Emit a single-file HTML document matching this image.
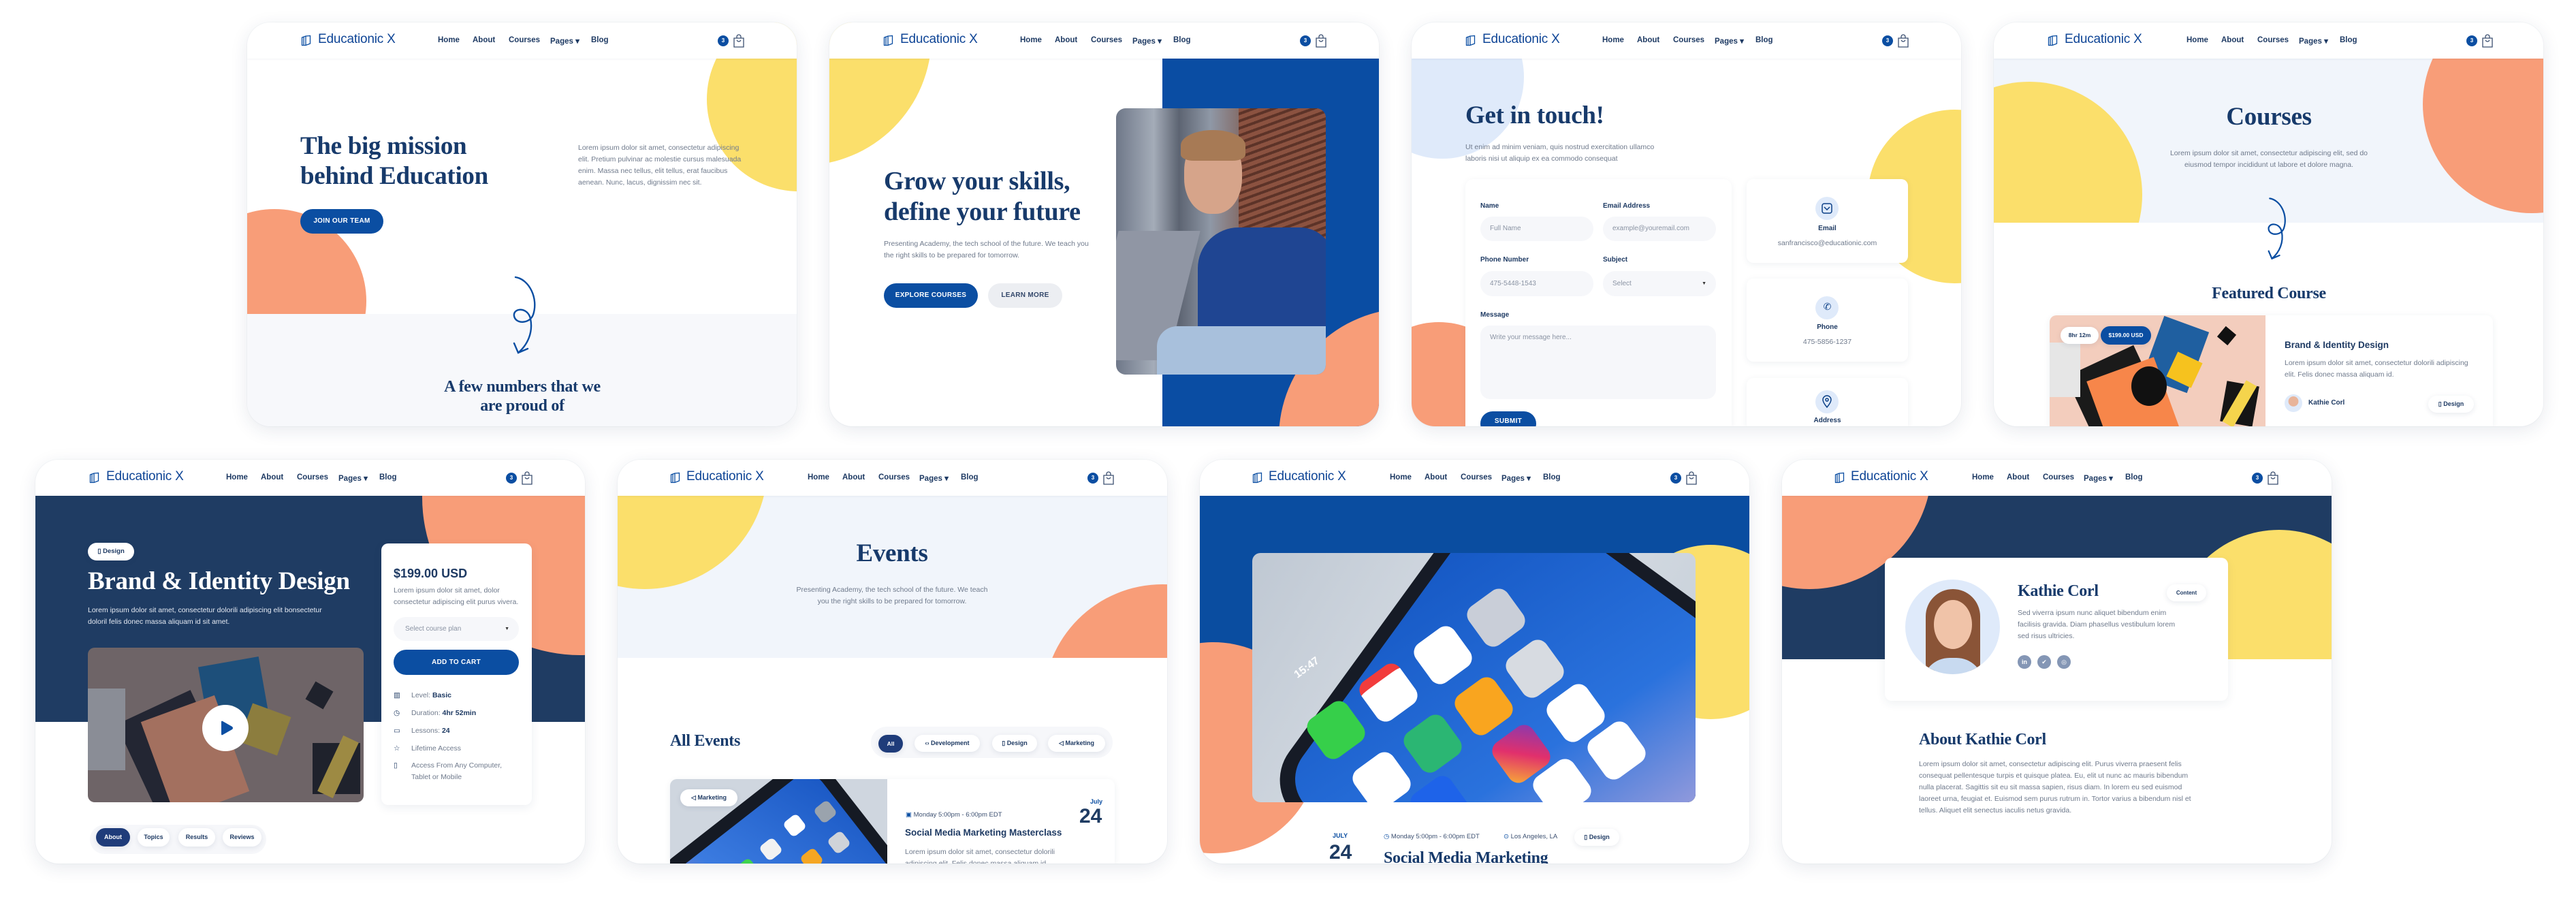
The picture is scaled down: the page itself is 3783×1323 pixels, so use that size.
<!DOCTYPE html>
<html style="width:3783px;height:1323px;overflow:hidden"><head><meta charset="utf-8">
<style>
*{margin:0;padding:0;box-sizing:border-box}
body{width:3783px;height:1323px;background:#fff;position:relative;overflow:hidden;font-family:"Liberation Sans",sans-serif;color:#1e3a63}
.c{position:absolute;width:807px;height:593px;border-radius:34px;overflow:hidden;background:#fff;box-shadow:0 6px 26px rgba(30,50,90,.10),0 0 0 1px rgba(30,50,90,.03)}
.a{position:absolute}
.hd{position:absolute;left:0;top:0;width:100%;height:53px;background:#fff;z-index:20;box-shadow:0 1px 3px rgba(30,50,90,.06)}
.lg{position:absolute;left:104px;top:14px;font-size:19px;color:#0f4596;letter-spacing:-.2px}
.nv{position:absolute;top:20px;font-size:11.5px;font-weight:bold;color:#1e3a63}
.bd{position:absolute;left:691px;top:19px;width:16px;height:16px;border-radius:50%;background:#0b4ea2;color:#fff;font-size:8px;font-weight:bold;text-align:center;line-height:16px}
.srf{font-family:"Liberation Serif",serif;font-weight:bold;color:#173a6b;letter-spacing:-.3px}
.p{font-size:10.5px;line-height:17px;color:#6f7a8c}
.circ{position:absolute;border-radius:50%}
.Y{background:#fbdf6b}.O{background:#f89d78}
.btn{position:absolute;border-radius:20px;background:#0b4ea2;color:#fff;font-size:10px;font-weight:bold;text-align:center;letter-spacing:.3px}
.pill{position:absolute;border-radius:14px;background:#fff;box-shadow:0 2px 8px rgba(30,50,90,.10);font-size:9.5px;font-weight:bold;color:#1e3a63;text-align:center}
.inp{position:absolute;border-radius:18px;background:#f6f7fa;font-size:10px;color:#8a93a3;padding-left:14px}
.lb{position:absolute;font-size:10px;font-weight:bold;color:#1e3a63}
</style></head><body>

<!-- CARD 1 -->
<div class="c" style="left:363px;top:33px">
 <div class="hd">
  <svg class="a" style="left:79px;top:18px" width="15" height="17" viewBox="0 0 15 17"><path d="M1.5 4 L7 2 L13.5 1.5 V13 L7 15.5 L1.5 15.5 Z M7 2 V15.5 M4 3 V15" fill="none" stroke="#0b4ea2" stroke-width="1.3"/></svg>
  <div class="lg">Educationic X</div>
  <div class="nv" style="left:280px">Home</div><div class="nv" style="left:331px">About</div><div class="nv" style="left:384px">Courses</div><div class="nv" style="left:445px">Pages ▾</div><div class="nv" style="left:505px">Blog</div>
  <div class="bd">3</div>
  <svg class="a" style="left:713px;top:17px" width="18" height="20" viewBox="0 0 18 20"><path d="M2 6 H16 V19 H2 Z M6 6 V4 A3 3 0 0 1 12 4 V6 M6 9 Q9 13 12 9" fill="none" stroke="#3b4f70" stroke-width="1.3"/></svg>
 </div>
 <div class="circ Y" style="left:675px;top:-22px;width:270px;height:270px"></div>
 <div class="circ O" style="left:-95px;top:274px;width:270px;height:270px"></div>
 <div class="a" style="left:0;top:428px;width:100%;height:170px;background:#f7f8fb"></div>
 <div class="a srf" style="left:78px;top:160px;font-size:37px;line-height:44px">The big mission<br>behind Education</div>
 <div class="a p" style="left:486px;top:176px;width:248px">Lorem ipsum dolor sit amet, consectetur adipiscing elit. Pretium pulvinar ac molestie cursus malesuada enim. Massa nec tellus, elit tellus, erat faucibus aenean. Nunc, lacus, dignissim nec sit.</div>
 <div class="btn" style="left:78px;top:274px;width:122px;height:36px;line-height:36px">JOIN OUR TEAM</div>
 <svg class="a" style="left:388px;top:371px" width="44" height="118" viewBox="0 0 44 118"><path d="M6 3 C26 6 40 34 32 58 C27 72 6 72 4 60 C2 48 24 46 28 64 C32 84 24 102 10 114 M4 100 L10 114 L24 108" fill="none" stroke="#0b4ea2" stroke-width="2.4" stroke-linecap="round"/></svg>
 <div class="a srf" style="left:0;width:808px;text-align:center;top:521px;font-size:24px;line-height:28px">A few numbers that we<br>are proud of</div>
</div>

<!-- CARD 2 -->
<div class="c" style="left:1218px;top:33px">
 <div class="hd">
  <svg class="a" style="left:79px;top:18px" width="15" height="17" viewBox="0 0 15 17"><path d="M1.5 4 L7 2 L13.5 1.5 V13 L7 15.5 L1.5 15.5 Z M7 2 V15.5 M4 3 V15" fill="none" stroke="#0b4ea2" stroke-width="1.3"/></svg>
  <div class="lg">Educationic X</div>
  <div class="nv" style="left:280px">Home</div><div class="nv" style="left:331px">About</div><div class="nv" style="left:384px">Courses</div><div class="nv" style="left:445px">Pages ▾</div><div class="nv" style="left:505px">Blog</div>
  <div class="bd">3</div>
  <svg class="a" style="left:713px;top:17px" width="18" height="20" viewBox="0 0 18 20"><path d="M2 6 H16 V19 H2 Z M6 6 V4 A3 3 0 0 1 12 4 V6 M6 9 Q9 13 12 9" fill="none" stroke="#3b4f70" stroke-width="1.3"/></svg>
 </div>
 <div class="circ Y" style="left:-230px;top:-170px;width:380px;height:380px"></div>
 <div class="a" style="left:489px;top:53px;width:320px;height:540px;background:#0a4da3"></div>
 <div class="circ O" style="left:660px;top:420px;width:380px;height:380px"></div>
 <div class="a" style="left:421px;top:126px;width:308px;height:391px;border-radius:14px;overflow:hidden;background:linear-gradient(90deg,#6f7889 0%,#a4acb8 18%,#5d6472 30%,#8f98a6 45%,#7b4c3c 70%,#9a5d46 100%)">
  <div class="a" style="left:180px;top:0;width:128px;height:260px;background:repeating-linear-gradient(160deg,#8b5240 0 6px,#5c3328 6px 10px)"></div>
  <div class="a" style="left:120px;top:175px;width:200px;height:170px;border-radius:60px 50px 10px 10px;background:#1f4592"></div>
  <div class="a" style="left:100px;top:40px;width:85px;height:115px;border-radius:45%;background:#d6a48a"></div>
  <div class="a" style="left:95px;top:32px;width:95px;height:45px;border-radius:50% 50% 20% 20%;background:#a77a55"></div>
  <div class="a" style="left:-20px;top:180px;width:120px;height:190px;background:#9096a4;transform:skewX(-14deg)"></div>
  <div class="a" style="left:60px;top:320px;width:260px;height:80px;background:#a8c0dc;border-radius:30px 10px 0 0"></div>
 </div>
 <div class="a srf" style="left:80px;top:211px;font-size:38px;line-height:45px">Grow your skills,<br>define your future</div>
 <div class="a p" style="left:80px;top:317px;width:310px">Presenting Academy, the tech school of the future. We teach you the right skills to be prepared for tomorrow.</div>
 <div class="btn" style="left:80px;top:383px;width:138px;height:36px;line-height:36px">EXPLORE COURSES</div>
 <div class="btn" style="left:233px;top:383px;width:109px;height:36px;line-height:36px;background:#eceef2;color:#33476a">LEARN MORE</div>
</div>

<!-- CARD 3 -->
<div class="c" style="left:2073px;top:33px">
 <div class="hd">
  <svg class="a" style="left:79px;top:18px" width="15" height="17" viewBox="0 0 15 17"><path d="M1.5 4 L7 2 L13.5 1.5 V13 L7 15.5 L1.5 15.5 Z M7 2 V15.5 M4 3 V15" fill="none" stroke="#0b4ea2" stroke-width="1.3"/></svg>
  <div class="lg">Educationic X</div>
  <div class="nv" style="left:280px">Home</div><div class="nv" style="left:331px">About</div><div class="nv" style="left:384px">Courses</div><div class="nv" style="left:445px">Pages ▾</div><div class="nv" style="left:505px">Blog</div>
  <div class="bd">3</div>
  <svg class="a" style="left:713px;top:17px" width="18" height="20" viewBox="0 0 18 20"><path d="M2 6 H16 V19 H2 Z M6 6 V4 A3 3 0 0 1 12 4 V6 M6 9 Q9 13 12 9" fill="none" stroke="#3b4f70" stroke-width="1.3"/></svg>
 </div>
 <div class="circ" style="left:-75px;top:-40px;width:240px;height:240px;background:#dfeafa"></div>
 <div class="circ Y" style="left:670px;top:128px;width:255px;height:255px"></div>
 <div class="circ O" style="left:-80px;top:440px;width:240px;height:240px"></div>
 <div class="a srf" style="left:79px;top:116px;font-size:37px;line-height:42px">Get in touch!</div>
 <div class="a p" style="left:79px;top:175px;width:300px">Ut enim ad minim veniam, quis nostrud exercitation ullamco laboris nisi ut aliquip ex ea commodo consequat</div>
 <div class="a" style="left:79px;top:230px;width:391px;height:363px;background:#fff;border-radius:12px 12px 0 0;box-shadow:0 2px 10px rgba(30,50,90,.06);overflow:hidden">
  <div class="lb" style="left:22px;top:34px">Name</div><div class="lb" style="left:202px;top:34px">Email Address</div>
  <div class="inp" style="left:22px;top:55px;width:166px;height:36px;line-height:36px">Full Name</div>
  <div class="inp" style="left:202px;top:55px;width:166px;height:36px;line-height:36px">example@youremail.com</div>
  <div class="lb" style="left:22px;top:113px">Phone Number</div><div class="lb" style="left:202px;top:113px">Subject</div>
  <div class="inp" style="left:22px;top:135px;width:166px;height:37px;line-height:37px">475-5448-1543</div>
  <div class="inp" style="left:202px;top:135px;width:166px;height:37px;line-height:37px">Select<span style="position:absolute;right:14px;font-size:7px;color:#333">▼</span></div>
  <div class="lb" style="left:22px;top:194px">Message</div>
  <div class="inp" style="left:22px;top:215px;width:346px;height:108px;padding-top:10px;line-height:16px;border-radius:14px">Write your message here...</div>
  <div class="btn" style="left:22px;top:341px;width:82px;height:36px;line-height:30px">SUBMIT</div>
 </div>
 <div class="a" style="left:492px;top:230px;width:237px;height:123px;background:#fff;border-radius:10px;box-shadow:0 2px 10px rgba(30,50,90,.07);text-align:center">
  <div class="circ" style="left:101px;top:26px;width:34px;height:34px;background:#dfeafa"></div>
  <svg class="a" style="left:109px;top:34px" width="18" height="18" viewBox="0 0 18 18"><rect x="2" y="2" width="14" height="14" rx="3" fill="none" stroke="#0b3f86" stroke-width="1.5"/><path d="M5 7 L9 11 L13 7" fill="none" stroke="#0b3f86" stroke-width="1.5"/></svg>
  <div class="lb" style="left:0;width:100%;top:67px">Email</div>
  <div class="a p" style="left:0;width:100%;top:86px">sanfrancisco@educationic.com</div>
 </div>
 <div class="a" style="left:492px;top:376px;width:237px;height:122px;background:#fff;border-radius:10px;box-shadow:0 2px 10px rgba(30,50,90,.07);text-align:center">
  <div class="circ" style="left:101px;top:26px;width:34px;height:34px;background:#dfeafa"></div>
  <div class="a" style="left:0;width:100%;top:33px;font-size:14px;color:#0b3f86">✆</div>
  <div class="lb" style="left:0;width:100%;top:66px">Phone</div>
  <div class="a p" style="left:0;width:100%;top:85px">475-5856-1237</div>
 </div>
 <div class="a" style="left:492px;top:522px;width:237px;height:71px;background:#fff;border-radius:10px 10px 0 0;box-shadow:0 2px 10px rgba(30,50,90,.07);text-align:center">
  <div class="circ" style="left:101px;top:18px;width:34px;height:34px;background:#dfeafa"></div>
  <svg class="a" style="left:110px;top:25px" width="16" height="20" viewBox="0 0 16 20"><path d="M8 18 C3 12 2 9 2 7 A6 6 0 0 1 14 7 C14 9 13 12 8 18 Z" fill="none" stroke="#0b3f86" stroke-width="1.5"/><circle cx="8" cy="7" r="2" fill="none" stroke="#0b3f86" stroke-width="1.5"/></svg>
  <div class="lb" style="left:0;width:100%;top:57px">Address</div>
 </div>
</div>

<!-- CARD 4 -->
<div class="c" style="left:2928px;top:33px">
 <div class="hd">
  <svg class="a" style="left:79px;top:18px" width="15" height="17" viewBox="0 0 15 17"><path d="M1.5 4 L7 2 L13.5 1.5 V13 L7 15.5 L1.5 15.5 Z M7 2 V15.5 M4 3 V15" fill="none" stroke="#0b4ea2" stroke-width="1.3"/></svg>
  <div class="lg">Educationic X</div>
  <div class="nv" style="left:283px">Home</div><div class="nv" style="left:334px">About</div><div class="nv" style="left:387px">Courses</div><div class="nv" style="left:448px">Pages ▾</div><div class="nv" style="left:508px">Blog</div>
  <div class="bd" style="left:694px">3</div>
  <svg class="a" style="left:716px;top:17px" width="18" height="20" viewBox="0 0 18 20"><path d="M2 6 H16 V19 H2 Z M6 6 V4 A3 3 0 0 1 12 4 V6 M6 9 Q9 13 12 9" fill="none" stroke="#3b4f70" stroke-width="1.3"/></svg>
 </div>
 <div class="a" style="left:0;top:53px;width:100%;height:241px;background:#f1f5fb;overflow:hidden">
  <div class="circ Y" style="left:-114px;top:34px;width:332px;height:332px"></div>
  <div class="circ O" style="left:630px;top:-93px;width:320px;height:320px"></div>
 </div>
 <div class="a srf" style="left:0;width:808px;text-align:center;top:118px;font-size:37px;line-height:42px">Courses</div>
 <div class="a p" style="left:0;width:808px;text-align:center;top:184px">Lorem ipsum dolor sit amet, consectetur adipiscing elit, sed do<br>eiusmod tempor incididunt ut labore et dolore magna.</div>
 <svg class="a" style="left:400px;top:256px" width="36" height="94" viewBox="0 0 44 118"><path d="M6 3 C26 6 40 34 32 58 C27 72 6 72 4 60 C2 48 24 46 28 64 C32 84 24 102 10 114 M4 100 L10 114 L24 108" fill="none" stroke="#0b4ea2" stroke-width="2.8" stroke-linecap="round"/></svg>
 <div class="a srf" style="left:0;width:808px;text-align:center;top:385px;font-size:24px;line-height:26px">Featured Course</div>
 <div class="a" style="left:82px;top:430px;width:651px;height:163px;border-radius:10px 10px 0 0;background:#fff;box-shadow:0 2px 10px rgba(30,50,90,.07);overflow:hidden">
  <div class="a" style="left:0;top:0;width:317px;height:200px;background:#f3cdbd;overflow:hidden">
   <div class="a" style="left:150px;top:10px;width:70px;height:95px;background:#1f5fa0;transform:rotate(20deg)"></div>
   <div class="a" style="left:50px;top:60px;width:110px;height:150px;background:#1a1a1a;transform:rotate(-25deg)"></div>
   <div class="a" style="left:75px;top:75px;width:105px;height:140px;background:#f7864a;transform:rotate(-20deg)"></div>
   <div class="circ" style="left:120px;top:75px;width:52px;height:58px;background:#111"></div>
   <div class="a" style="left:178px;top:60px;width:40px;height:40px;background:#f6c21e;transform:rotate(25deg)"></div>
   <div class="a" style="left:255px;top:100px;width:48px;height:60px;background:#151515;transform:rotate(10deg)"></div>
   <div class="a" style="left:270px;top:95px;width:18px;height:70px;background:#f5d44c;transform:rotate(30deg)"></div>
   <div class="a" style="left:250px;top:20px;width:20px;height:20px;background:#111;transform:rotate(40deg)"></div>
   <div class="a" style="left:0;top:40px;width:45px;height:80px;background:#e6e6e6"></div>
  </div>
  <div class="pill" style="left:16px;top:17px;width:56px;height:25px;line-height:25px;font-size:8.5px">8hr 12m</div>
  <div class="pill" style="left:75px;top:16px;width:74px;height:27px;line-height:27px;font-size:8.5px;background:#0b4ea2;color:#fff">$199.00 USD</div>
  <div class="a" style="left:345px;top:36px;font-size:13.5px;font-weight:bold;color:#1e3a63">Brand &amp; Identity Design</div>
  <div class="a p" style="left:345px;top:62px;width:280px">Lorem ipsum dolor sit amet, consectetur dolorili adipiscing elit. Felis donec massa aliquam id.</div>
  <div class="circ" style="left:345px;top:116px;width:26px;height:26px;background:radial-gradient(circle at 50% 40%,#e8b49a 35%,#dfeafa 38%)"></div>
  <div class="a" style="left:380px;top:123px;font-size:10px;font-weight:bold">Kathie Corl</div>
  <div class="pill" style="left:556px;top:118px;width:67px;height:25px;line-height:25px;font-size:9px">▯ Design</div>
 </div>
</div>

<!-- CARD 5 -->
<div class="c" style="left:52px;top:675px">
 <div class="hd">
  <svg class="a" style="left:79px;top:18px" width="15" height="17" viewBox="0 0 15 17"><path d="M1.5 4 L7 2 L13.5 1.5 V13 L7 15.5 L1.5 15.5 Z M7 2 V15.5 M4 3 V15" fill="none" stroke="#0b4ea2" stroke-width="1.3"/></svg>
  <div class="lg">Educationic X</div>
  <div class="nv" style="left:280px">Home</div><div class="nv" style="left:331px">About</div><div class="nv" style="left:384px">Courses</div><div class="nv" style="left:445px">Pages ▾</div><div class="nv" style="left:505px">Blog</div>
  <div class="bd">3</div>
  <svg class="a" style="left:713px;top:17px" width="18" height="20" viewBox="0 0 18 20"><path d="M2 6 H16 V19 H2 Z M6 6 V4 A3 3 0 0 1 12 4 V6 M6 9 Q9 13 12 9" fill="none" stroke="#3b4f70" stroke-width="1.3"/></svg>
 </div>
 <div class="a" style="left:0;top:53px;width:100%;height:332px;background:#1f3c63;overflow:hidden">
  <div class="circ O" style="left:568px;top:-230px;width:464px;height:464px"></div>
 </div>
 <div class="pill" style="left:77px;top:122px;width:68px;height:26px;line-height:26px;font-size:9.5px">▯ Design</div>
 <div class="a srf" style="left:77px;top:158px;font-size:37px;line-height:42px;color:#fff">Brand &amp; Identity Design</div>
 <div class="a p" style="left:77px;top:213px;width:370px;color:#e4e9f2">Lorem ipsum dolor sit amet, consectetur dolorili adipiscing elit bonsectetur doloril felis donec massa aliquam id sit amet.</div>
 <div class="a" style="left:77px;top:276px;width:405px;height:227px;border-radius:10px;overflow:hidden;background:#6e6467">
  <div class="a" style="left:170px;top:20px;width:90px;height:100px;background:#1d4f7a;transform:rotate(-10deg)"></div>
  <div class="a" style="left:70px;top:80px;width:120px;height:160px;background:#232633;transform:rotate(-25deg)"></div>
  <div class="a" style="left:100px;top:85px;width:115px;height:150px;background:#a3705f;transform:rotate(-20deg)"></div>
  <div class="a" style="left:230px;top:90px;width:60px;height:60px;background:#8c7d3e;transform:rotate(20deg)"></div>
  <div class="a" style="left:330px;top:140px;width:70px;height:75px;background:#1f222c"></div>
  <div class="a" style="left:355px;top:130px;width:25px;height:90px;background:#9d8a43;transform:rotate(25deg)"></div>
  <div class="a" style="left:325px;top:55px;width:30px;height:30px;background:#1f222c;transform:rotate(30deg)"></div>
  <div class="a" style="left:0;top:60px;width:55px;height:120px;background:#8a8d96"></div>
  <div class="circ" style="left:168px;top:84px;width:68px;height:68px;background:#fff"></div>
  <svg class="a" style="left:193px;top:106px" width="22" height="24" viewBox="0 0 22 24"><path d="M3 3 Q3 1 5 2 L19 10 Q21 12 19 14 L5 22 Q3 23 3 21 Z" fill="#0b4ea2"/></svg>
 </div>
 <div class="a" style="left:508px;top:123px;width:221px;height:384px;background:#fff;border-radius:10px;box-shadow:0 4px 14px rgba(30,50,90,.08)">
  <div class="a" style="left:18px;top:34px;font-size:18px;font-weight:bold;color:#1e3a63">$199.00 USD</div>
  <div class="a p" style="left:18px;top:61px;width:195px">Lorem ipsum dolor sit amet, dolor consectetur adipiscing elit purus vivera.</div>
  <div class="inp" style="left:18px;top:108px;width:184px;height:35px;line-height:35px;padding-left:17px">Select course plan<span style="position:absolute;right:14px;font-size:7px;color:#333">▼</span></div>
  <div class="btn" style="left:18px;top:156px;width:184px;height:37px;line-height:37px">ADD TO CART</div>
  <div class="a p" style="left:18px;top:210px;line-height:26px;font-size:10.5px">
   <div><span style="display:inline-block;width:26px;color:#1e3a63">▥</span>Level: <b style="color:#1e3a63">Basic</b></div>
   <div><span style="display:inline-block;width:26px;color:#1e3a63">◷</span>Duration: <b style="color:#1e3a63">4hr 52min</b></div>
   <div><span style="display:inline-block;width:26px;color:#1e3a63">▭</span>Lessons: <b style="color:#1e3a63">24</b></div>
   <div><span style="display:inline-block;width:26px;color:#1e3a63">☆</span>Lifetime Access</div>
   <div style="line-height:17px;margin-top:4px"><span style="display:inline-block;width:26px;color:#1e3a63">▯</span>Access From Any Computer,<br><span style="display:inline-block;width:26px"></span>Tablet or Mobile</div>
  </div>
 </div>
 <div class="a" style="left:80px;top:536px;width:259px;height:43px;border-radius:22px;background:#f6f7fa"></div>
 <div class="pill" style="left:89px;top:541px;width:50px;height:27px;line-height:27px;background:#1f3c7a;color:#fff;font-size:9px">About</div>
 <div class="pill" style="left:150px;top:541px;width:47px;height:27px;line-height:27px;font-size:9px">Topics</div>
 <div class="pill" style="left:210px;top:541px;width:54px;height:27px;line-height:27px;font-size:9px">Results</div>
 <div class="pill" style="left:275px;top:541px;width:57px;height:27px;line-height:27px;font-size:9px">Reviews</div>
</div>

<!-- CARD 6 -->
<div class="c" style="left:907px;top:675px">
 <div class="hd">
  <svg class="a" style="left:77px;top:18px" width="15" height="17" viewBox="0 0 15 17"><path d="M1.5 4 L7 2 L13.5 1.5 V13 L7 15.5 L1.5 15.5 Z M7 2 V15.5 M4 3 V15" fill="none" stroke="#0b4ea2" stroke-width="1.3"/></svg>
  <div class="lg" style="left:101px">Educationic X</div>
  <div class="nv" style="left:279px">Home</div><div class="nv" style="left:330px">About</div><div class="nv" style="left:383px">Courses</div><div class="nv" style="left:443px">Pages ▾</div><div class="nv" style="left:504px">Blog</div>
  <div class="bd" style="left:690px">3</div>
  <svg class="a" style="left:712px;top:17px" width="18" height="20" viewBox="0 0 18 20"><path d="M2 6 H16 V19 H2 Z M6 6 V4 A3 3 0 0 1 12 4 V6 M6 9 Q9 13 12 9" fill="none" stroke="#3b4f70" stroke-width="1.3"/></svg>
 </div>
 <div class="a" style="left:0;top:53px;width:100%;height:238px;background:#f1f5fb;overflow:hidden">
  <div class="circ Y" style="left:-140px;top:-223px;width:360px;height:360px"></div>
  <div class="circ O" style="left:625px;top:130px;width:350px;height:350px"></div>
 </div>
 <div class="a srf" style="left:0;width:806px;text-align:center;top:117px;font-size:37px;line-height:42px">Events</div>
 <div class="a p" style="left:0;width:806px;text-align:center;top:183px">Presenting Academy, the tech school of the future. We teach<br>you the right skills to be prepared for tomorrow.</div>
 <div class="a srf" style="left:77px;top:400px;font-size:24px;line-height:26px">All Events</div>
 <div class="a" style="left:372px;top:392px;width:355px;height:46px;border-radius:23px;background:#f6f7fa"></div>
 <div class="pill" style="left:383px;top:404px;width:36px;height:26px;line-height:26px;background:#1f3c7a;color:#fff;font-size:8.5px">All</div>
 <div class="pill" style="left:436px;top:404px;width:96px;height:25px;line-height:25px;font-size:9px">‹› Development</div>
 <div class="pill" style="left:550px;top:404px;width:66px;height:25px;line-height:25px;font-size:9px">▯ Design</div>
 <div class="pill" style="left:632px;top:404px;width:84px;height:25px;line-height:25px;font-size:9px">◁ Marketing</div>
 <div class="a" style="left:77px;top:469px;width:653px;height:124px;border-radius:10px 10px 0 0;background:#fff;box-shadow:0 2px 10px rgba(30,50,90,.07);overflow:hidden">
  <div class="a" style="left:0;top:0;width:319px;height:160px;background:#cfd6df;overflow:hidden">
   <div class="a" style="left:40px;top:0;width:260px;height:300px;border-radius:40px;background:#151a24;transform:rotate(52deg)"></div>
   <div class="a" style="left:55px;top:20px;width:230px;height:270px;border-radius:30px;background:linear-gradient(160deg,#1a58c4,#3b7be0 60%,#e58aa0);transform:rotate(52deg)"></div>
   <div class="a" style="left:170px;top:55px;width:26px;height:26px;border-radius:7px;background:#fff;transform:rotate(-38deg)"></div>
   <div class="a" style="left:215px;top:35px;width:26px;height:26px;border-radius:7px;background:#9aa3ad;transform:rotate(-38deg)"></div>
   <div class="a" style="left:135px;top:90px;width:26px;height:26px;border-radius:7px;background:#f2f2f2;transform:rotate(-38deg)"></div>
   <div class="a" style="left:100px;top:120px;width:26px;height:26px;border-radius:7px;background:#3fd24e;transform:rotate(-38deg)"></div>
   <div class="a" style="left:195px;top:105px;width:26px;height:26px;border-radius:7px;background:#f5a623;transform:rotate(-38deg)"></div>
   <div class="a" style="left:235px;top:80px;width:26px;height:26px;border-radius:7px;background:#cfd3d9;transform:rotate(-38deg)"></div>
  </div>
  <div class="pill" style="left:15px;top:15px;width:84px;height:25px;line-height:25px;font-size:9px">◁ Marketing</div>
  <div class="a p" style="left:346px;top:44px;font-size:9.5px;color:#3b4f70"><span style="color:#0b4ea2">▣</span> Monday 5:00pm - 6:00pm EDT</div>
  <div class="a" style="left:617px;top:28px;font-size:9px;font-weight:bold;color:#0b4ea2">July</div>
  <div class="a" style="left:601px;top:38px;font-size:30px;font-weight:bold;color:#1f3c63">24</div>
  <div class="a" style="left:345px;top:71px;font-size:13.5px;font-weight:bold;color:#1e3a63">Social Media Marketing Masterclass</div>
  <div class="a p" style="left:345px;top:99px;width:240px">Lorem ipsum dolor sit amet, consectetur dolorili adipiscing elit. Felis donec massa aliquam id.</div>
 </div>
</div>

<!-- CARD 7 -->
<div class="c" style="left:1762px;top:675px">
 <div class="hd">
  <svg class="a" style="left:77px;top:18px" width="15" height="17" viewBox="0 0 15 17"><path d="M1.5 4 L7 2 L13.5 1.5 V13 L7 15.5 L1.5 15.5 Z M7 2 V15.5 M4 3 V15" fill="none" stroke="#0b4ea2" stroke-width="1.3"/></svg>
  <div class="lg" style="left:101px">Educationic X</div>
  <div class="nv" style="left:279px">Home</div><div class="nv" style="left:330px">About</div><div class="nv" style="left:383px">Courses</div><div class="nv" style="left:443px">Pages ▾</div><div class="nv" style="left:504px">Blog</div>
  <div class="bd" style="left:691px">3</div>
  <svg class="a" style="left:713px;top:17px" width="18" height="20" viewBox="0 0 18 20"><path d="M2 6 H16 V19 H2 Z M6 6 V4 A3 3 0 0 1 12 4 V6 M6 9 Q9 13 12 9" fill="none" stroke="#3b4f70" stroke-width="1.3"/></svg>
 </div>
 <div class="a" style="left:0;top:53px;width:100%;height:300px;background:#0a4da0"></div>
 <div class="circ Y" style="left:622px;top:125px;width:256px;height:256px"></div>
 <div class="circ O" style="left:-135px;top:268px;width:310px;height:310px"></div>
 <div class="a" style="left:77px;top:137px;width:651px;height:366px;border-radius:12px;overflow:hidden;background:linear-gradient(120deg,#bfc8d3,#d7dde4 50%,#c3ccd6)">
  <div class="a" style="left:40px;top:-60px;width:600px;height:700px;border-radius:70px;background:#161b26;transform:rotate(-54deg) translate(60px,120px)"></div>
  <div class="a" style="left:60px;top:-40px;width:560px;height:660px;border-radius:56px;background:linear-gradient(200deg,#1456c2 0%,#2a72dd 45%,#9a9ddc 70%,#f08d8a 90%);transform:rotate(-54deg) translate(60px,120px)"></div>
  <div class="a" style="left:88px;top:225px;width:70px;height:70px;border-radius:16px;background:#36cf4a;transform:rotate(-36deg)"></div>
  <div class="a" style="left:165px;top:170px;width:70px;height:70px;border-radius:16px;background:#fff;border-top:14px solid #f23c3c;transform:rotate(-36deg)"></div>
  <div class="a" style="left:245px;top:115px;width:70px;height:70px;border-radius:16px;background:#fff;transform:rotate(-36deg)"></div>
  <div class="a" style="left:323px;top:60px;width:70px;height:70px;border-radius:16px;background:#c9ced8;transform:rotate(-36deg)"></div>
  <div class="a" style="left:155px;top:300px;width:70px;height:70px;border-radius:16px;background:#fff;transform:rotate(-36deg)"></div>
  <div class="a" style="left:230px;top:245px;width:70px;height:70px;border-radius:16px;background:#2bb673;transform:rotate(-36deg)"></div>
  <div class="a" style="left:305px;top:190px;width:70px;height:70px;border-radius:16px;background:#f9a51f;transform:rotate(-36deg)"></div>
  <div class="a" style="left:380px;top:135px;width:70px;height:70px;border-radius:16px;background:#d7dbe1;transform:rotate(-36deg)"></div>
  <div class="a" style="left:360px;top:260px;width:70px;height:70px;border-radius:16px;background:linear-gradient(45deg,#f9b233,#e1306c,#833ab4);transform:rotate(-36deg)"></div>
  <div class="a" style="left:440px;top:200px;width:70px;height:70px;border-radius:16px;background:#fff;transform:rotate(-36deg)"></div>
  <div class="a" style="left:240px;top:335px;width:70px;height:70px;border-radius:16px;background:#1e63e9;transform:rotate(-36deg)"></div>
  <div class="a" style="left:420px;top:310px;width:70px;height:70px;border-radius:16px;background:#fff;transform:rotate(-36deg)"></div>
  <div class="a" style="left:500px;top:255px;width:70px;height:70px;border-radius:16px;background:#fff;transform:rotate(-36deg)"></div>
  <div class="a" style="left:60px;top:160px;color:#fff;font-size:16px;font-weight:bold;transform:rotate(-36deg)">15:47</div>
 </div>
 <div class="a" style="left:195px;top:547px;font-size:9px;font-weight:bold;color:#0b4ea2">JULY</div>
 <div class="a" style="left:190px;top:560px;font-size:30px;font-weight:bold;color:#1f3c63">24</div>
 <div class="a p" style="left:270px;top:545px;font-size:9.5px;color:#3b4f70"><span style="color:#0b4ea2">◷</span> Monday 5:00pm - 6:00pm EDT</div>
 <div class="a p" style="left:446px;top:545px;font-size:9.5px;color:#3b4f70"><span style="color:#0b4ea2">⊙</span> Los Angeles, LA</div>
 <div class="pill" style="left:550px;top:542px;width:66px;height:25px;line-height:25px;font-size:9px">▯ Design</div>
 <div class="a srf" style="left:270px;top:572px;font-size:24px;line-height:26px">Social Media Marketing</div>
</div>

<!-- CARD 8 -->
<div class="c" style="left:2617px;top:675px">
 <div class="hd">
  <svg class="a" style="left:77px;top:18px" width="15" height="17" viewBox="0 0 15 17"><path d="M1.5 4 L7 2 L13.5 1.5 V13 L7 15.5 L1.5 15.5 Z M7 2 V15.5 M4 3 V15" fill="none" stroke="#0b4ea2" stroke-width="1.3"/></svg>
  <div class="lg" style="left:101px">Educationic X</div>
  <div class="nv" style="left:279px">Home</div><div class="nv" style="left:330px">About</div><div class="nv" style="left:383px">Courses</div><div class="nv" style="left:443px">Pages ▾</div><div class="nv" style="left:504px">Blog</div>
  <div class="bd" style="left:690px">3</div>
  <svg class="a" style="left:712px;top:17px" width="18" height="20" viewBox="0 0 18 20"><path d="M2 6 H16 V19 H2 Z M6 6 V4 A3 3 0 0 1 12 4 V6 M6 9 Q9 13 12 9" fill="none" stroke="#3b4f70" stroke-width="1.3"/></svg>
 </div>
 <div class="a" style="left:0;top:53px;width:100%;height:240px;background:#1f3c63;overflow:hidden">
  <div class="circ O" style="left:-140px;top:-223px;width:360px;height:360px"></div>
  <div class="circ Y" style="left:573px;top:50px;width:314px;height:314px"></div>
 </div>
 <div class="a" style="left:151px;top:144px;width:504px;height:210px;border-radius:10px;background:#fff;box-shadow:0 4px 14px rgba(30,50,90,.07)">
  <div class="circ" style="left:30px;top:32px;width:139px;height:139px;background:#dfeafa;overflow:hidden">
   <div class="a" style="left:30px;top:14px;width:80px;height:120px;border-radius:40px 40px 10px 10px;background:#8a5437"></div>
   <div class="a" style="left:42px;top:30px;width:56px;height:72px;border-radius:50%;background:#f0c3a8"></div>
   <div class="a" style="left:25px;top:115px;width:90px;height:40px;border-radius:40px 40px 0 0;background:#c8daf0"></div>
  </div>
  <div class="a srf" style="left:195px;top:35px;font-size:24px;line-height:28px">Kathie Corl</div>
  <div class="pill" style="left:414px;top:39px;width:58px;height:25px;line-height:25px;font-size:8px">Content</div>
  <div class="a p" style="left:195px;top:73px;width:250px">Sed viverra ipsum nunc aliquet bibendum enim facilisis gravida. Diam phasellus vestibulum lorem sed risus ultricies.</div>
  <div class="circ" style="left:195px;top:143px;width:20px;height:20px;background:#8496b5;color:#fff;font-size:9px;font-weight:bold;text-align:center;line-height:20px">in</div>
  <div class="circ" style="left:224px;top:143px;width:20px;height:20px;background:#8496b5;color:#fff;font-size:9px;text-align:center;line-height:20px">✔</div>
  <div class="circ" style="left:253px;top:143px;width:20px;height:20px;background:#8496b5;color:#fff;font-size:9px;text-align:center;line-height:20px">◎</div>
 </div>
 <div class="a srf" style="left:201px;top:397px;font-size:24px;line-height:28px">About Kathie Corl</div>
 <div class="a p" style="left:201px;top:439px;width:410px">Lorem ipsum dolor sit amet, consectetur adipiscing elit. Purus viverra praesent felis consequat pellentesque turpis et quisque platea. Eu, elit ut nunc ac mauris bibendum nulla placerat. Sagittis sit eu sit massa sapien, risus diam. In lorem eu sed euismod laoreet urna, feugiat et. Euismod sem purus rutrum in. Tortor varius a bibendum nisl et tellus. Aliquet elit senectus iaculis netus gravida.</div>
</div>

</body></html>
